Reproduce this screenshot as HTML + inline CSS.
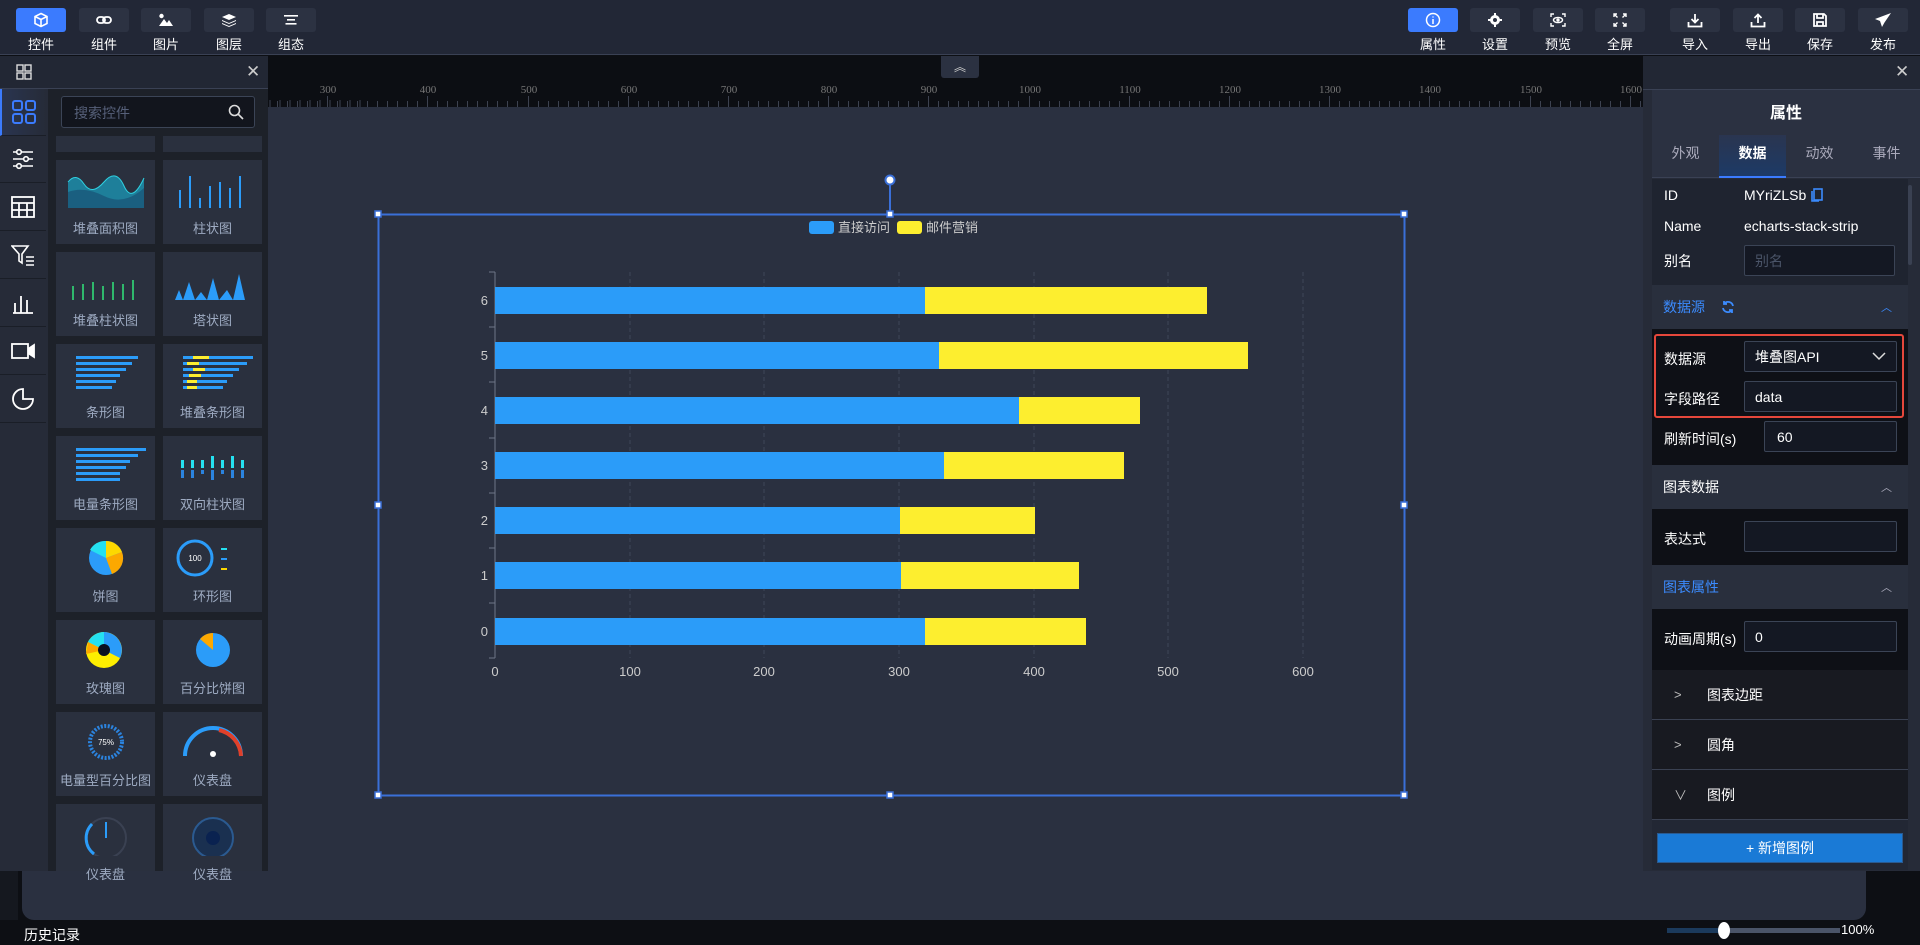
<!DOCTYPE html>
<html><head><meta charset="utf-8"><style>
*{margin:0;padding:0;box-sizing:border-box}
body{width:1920px;height:945px;overflow:hidden;background:#0d0f14;font-family:"Liberation Sans","Noto Sans CJK SC",sans-serif;color:#fff;position:relative}
.a{position:absolute}
.tb{position:absolute;top:8px;width:50px;height:24px;background:#2c3242;border-radius:3px;display:flex;align-items:center;justify-content:center}
.tb.on{background:#3b7bfe}
.tl{position:absolute;top:34px;width:50px;text-align:center;font-size:13px;color:#fff}
.ic{position:absolute;left:0;width:46px;height:47px;border-bottom:1px solid #1a1e27;display:flex;align-items:center;justify-content:center}
.card{position:absolute;width:99px;height:84px;background:#2a303e}
.card .t{position:absolute;left:0;right:0;top:58px;text-align:center;font-size:13px;color:#9eabc2}
.card svg{position:absolute;left:8px;top:8px}
.lab{position:absolute;font-size:14px;color:#fff}
.inp{position:absolute;background:#141823;border:1px solid #3b4456;border-radius:2px;font-size:14px;color:#fff;padding-left:10px;display:flex;align-items:center}
.sh{position:absolute;left:1652px;width:256px;height:44px;background:#292f3d;font-size:14px;display:flex;align-items:center;padding-left:11px}
.sh .ar{position:absolute;right:16px;top:14px;color:#aab;font-size:11px}
.row{position:absolute;left:1652px;width:256px;height:50px;background:#181a21;border-bottom:1px solid #3a4152;font-size:14px;display:flex;align-items:center;padding-left:55px}
.row .ch{position:absolute;left:22px;color:#bbb;font-size:13px}
</style></head><body>

<!-- top bar -->
<div class="a" style="left:0;top:0;width:1920px;height:55px;background:#222736;border-bottom:1px solid #3a4154"></div>
<div class="tb on" style="left:16px"><svg width="16" height="16" viewBox="0 0 16 16" fill="none" stroke="#fff" stroke-width="1.6"><path d="M8 1.5L14 4.5V11.5L8 14.5L2 11.5V4.5Z M2 4.5L8 7.5L14 4.5 M8 7.5V14.5"/></svg></div><div class="tl" style="left:16px">控件</div>
<div class="tb" style="left:79px"><svg width="16" height="10" viewBox="0 0 16 10" fill="none" stroke="#fff" stroke-width="1.8"><rect x="1" y="2" width="8" height="6" rx="3"/><rect x="7" y="2" width="8" height="6" rx="3"/></svg></div><div class="tl" style="left:79px">组件</div>
<div class="tb" style="left:141px"><svg width="16" height="14" viewBox="0 0 16 14" fill="#fff"><circle cx="3.5" cy="3" r="2.2"/><path d="M1 13L6 6L9 10L11 7L15 13Z"/></svg></div><div class="tl" style="left:141px">图片</div>
<div class="tb" style="left:204px"><svg width="16" height="14" viewBox="0 0 16 14" fill="#fff"><path d="M8 1L15 4L8 7L1 4Z"/><path d="M1 7L8 10L15 7V8L8 11L1 8Z"/><path d="M1 10L8 13L15 10V11L8 14L1 11Z"/></svg></div><div class="tl" style="left:204px">图层</div>
<div class="tb" style="left:266px"><svg width="14" height="10" viewBox="0 0 14 10" fill="#fff"><rect x="0" y="0" width="14" height="1.6"/><rect x="3" y="4" width="8" height="1.6"/><rect x="1.5" y="8" width="11" height="1.6"/></svg></div><div class="tl" style="left:266px">组态</div>

<div class="tb on" style="left:1408px"><svg width="16" height="16" viewBox="0 0 16 16" fill="none" stroke="#fff" stroke-width="1.5"><circle cx="8" cy="8" r="6.5"/><path d="M8 7V12 M8 4.5V5.5"/></svg></div><div class="tl" style="left:1408px">属性</div>
<div class="tb" style="left:1470px"><svg width="14" height="14" viewBox="0 0 14 14" fill="#fff"><circle cx="7" cy="7" r="5"/><circle cx="7" cy="7" r="2" fill="#2c3242"/><path d="M6 0h2v3H6zM6 11h2v3H6zM0 6h3v2H0zM11 6h3v2h-3z"/></svg></div><div class="tl" style="left:1470px">设置</div>
<div class="tb" style="left:1533px"><svg width="16" height="14" viewBox="0 0 16 14" fill="none" stroke="#fff" stroke-width="1.4"><path d="M1 4V1H4M12 1H15V4M15 10V13H12M4 13H1V10"/><ellipse cx="8" cy="7" rx="4.5" ry="2.6"/><circle cx="8" cy="7" r="1" fill="#fff"/></svg></div><div class="tl" style="left:1533px">预览</div>
<div class="tb" style="left:1595px"><svg width="14" height="14" viewBox="0 0 14 14" fill="none" stroke="#fff" stroke-width="1.4"><path d="M1 4V1H4M1 1L4.5 4.5M10 1H13V4M13 1L9.5 4.5M13 10V13H10M13 13L9.5 9.5M4 13H1V10M1 13L4.5 9.5"/></svg></div><div class="tl" style="left:1595px">全屏</div>
<div class="tb" style="left:1670px"><svg width="16" height="15" viewBox="0 0 16 15" fill="none" stroke="#fff" stroke-width="1.8"><path d="M8 1V9 M4.5 6L8 9.5L11.5 6 M1.5 9V13.5H14.5V9"/></svg></div><div class="tl" style="left:1670px">导入</div>
<div class="tb" style="left:1733px"><svg width="16" height="15" viewBox="0 0 16 15" fill="none" stroke="#fff" stroke-width="1.8"><path d="M8 10V2 M4.5 5L8 1.5L11.5 5 M1.5 9V13.5H14.5V9"/></svg></div><div class="tl" style="left:1733px">导出</div>
<div class="tb" style="left:1795px"><svg width="14" height="14" viewBox="0 0 14 14" fill="none" stroke="#fff" stroke-width="1.8"><path d="M1 1H11L13 3V13H1Z M4 1V5H10V1 M4 13V9H10V13"/></svg></div><div class="tl" style="left:1795px">保存</div>
<div class="tb" style="left:1858px"><svg width="18" height="16" viewBox="0 0 18 16" fill="#fff"><path d="M17 1L1 7L6 9L8 15L10.5 10.5L17 1Z"/></svg></div><div class="tl" style="left:1858px">发布</div>

<!-- ruler -->
<div class="a" style="left:268px;top:56px;width:1375px;height:51px;background:#0c0e13"></div>
<svg class="a" style="left:0;top:0" width="1920" height="945">
<g stroke="#3d4250" stroke-width="1">
<path d="M270 100V107M280 100V107M290 100V107M300 100V107M310 100V107M320 100V107M330 100V107M340 100V107M350 100V107M360 100V107"/>
</g>
</svg>
<div id="ruler"></div>

<!-- canvas -->
<div class="a" style="left:268px;top:107px;width:1382px;height:764px;background:#2a3040"></div>
<div class="a" style="left:22px;top:860px;width:1844px;height:60px;background:#2a3040;border-radius:0 0 12px 12px"></div>
<div class="a" style="left:941px;top:56px;width:38px;height:22px;background:#2b3141;border-radius:0 0 3px 3px;text-align:center;color:#ccc;font-size:12px;line-height:22px">︽</div>

<!-- chart -->
<svg class="a" style="left:0;top:0" width="1920" height="945" font-family="Liberation Sans, Noto Sans CJK SC, sans-serif">
<rect x="378.5" y="214.5" width="1026" height="581" fill="none" stroke="#3a6fd8" stroke-width="2"/>
<line x1="890" y1="183" x2="890" y2="214" stroke="#3a6fd8" stroke-width="2"/>
<circle cx="890" cy="180" r="4.5" fill="#fff" stroke="#3a6fd8" stroke-width="2"/>
<g fill="#fff" stroke="#3a6fd8" stroke-width="1.5">
<rect x="375" y="211" width="6" height="6"/><rect x="887" y="211" width="6" height="6"/><rect x="1401" y="211" width="6" height="6"/>
<rect x="375" y="502" width="6" height="6"/><rect x="1401" y="502" width="6" height="6"/>
<rect x="375" y="792" width="6" height="6"/><rect x="887" y="792" width="6" height="6"/><rect x="1401" y="792" width="6" height="6"/>
</g>
<rect x="809" y="221" width="25" height="13" rx="3" fill="#2b9cf9"/><text x="838" y="232" font-size="13" fill="#ccc">直接访问</text>
<rect x="897" y="221" width="25" height="13" rx="3" fill="#fdee2f"/><text x="926" y="232" font-size="13" fill="#ccc">邮件营销</text>
<g stroke="#3f4658" stroke-dasharray="4 3">
<path d="M630 272V658M764 272V658M899 272V658M1034 272V658M1168 272V658M1303 272V658"/>
</g>
<g stroke="#6e7687"><path d="M495 272V658M489 272H495M489 327H495M489 382H495M489 438H495M489 493H495M489 548H495M489 603H495M489 658H495"/></g>
<g font-size="13" fill="#ccc" text-anchor="end">
<text x="488" y="305">6</text><text x="488" y="360">5</text><text x="488" y="415">4</text><text x="488" y="470">3</text><text x="488" y="525">2</text><text x="488" y="580">1</text><text x="488" y="636">0</text>
</g>
<g font-size="13" fill="#ccc" text-anchor="middle">
<text x="495" y="676">0</text><text x="630" y="676">100</text><text x="764" y="676">200</text><text x="899" y="676">300</text><text x="1034" y="676">400</text><text x="1168" y="676">500</text><text x="1303" y="676">600</text>
</g>
<g fill="#2b9cf9">
<rect x="495" y="287" width="430" height="27"/><rect x="495" y="342" width="444" height="27"/><rect x="495" y="397" width="524" height="27"/><rect x="495" y="452" width="449" height="27"/><rect x="495" y="507" width="405" height="27"/><rect x="495" y="562" width="406" height="27"/><rect x="495" y="618" width="430" height="27"/>
</g>
<g fill="#fdee2f">
<rect x="925" y="287" width="282" height="27"/><rect x="939" y="342" width="309" height="27"/><rect x="1019" y="397" width="121" height="27"/><rect x="944" y="452" width="180" height="27"/><rect x="900" y="507" width="135" height="27"/><rect x="901" y="562" width="178" height="27"/><rect x="925" y="618" width="161" height="27"/>
</g>
</svg>

<!-- left panel -->
<div class="a" style="left:0;top:56px;width:268px;height:815px;background:#222734"></div>
<div class="a" style="left:0;top:56px;width:268px;height:33px;border-bottom:1px solid #3a4154"></div>
<svg class="a" style="left:16px;top:64px" width="16" height="16" fill="none" stroke="#ddd" stroke-width="1.4"><rect x="1" y="1" width="6" height="6"/><rect x="9" y="1" width="6" height="6"/><rect x="1" y="9" width="6" height="6"/><rect x="9" y="9" width="6" height="6"/></svg>
<div class="a" style="left:246px;top:62px;color:#ccc;font-size:17px">✕</div>
<div class="a" style="left:0;top:89px;width:48px;height:782px;background:#262b38"></div>
<div class="ic" style="top:89px;background:linear-gradient(90deg,#2a3550,#262b38);border-left:2px solid #3b7bfe"><svg width="24" height="24" fill="none" stroke="#3b7bfe" stroke-width="2"><rect x="1" y="1" width="9" height="9" rx="2"/><rect x="14" y="1" width="9" height="9" rx="2"/><rect x="1" y="14" width="9" height="9" rx="2"/><rect x="14" y="14" width="9" height="9" rx="2"/></svg></div>
<div class="ic" style="top:136px"><svg width="22" height="22" fill="none" stroke="#fff" stroke-width="1.6"><path d="M1 4H21M1 11H21M1 18H21"/><circle cx="7" cy="4" r="2.3" fill="#262b38"/><circle cx="14" cy="11" r="2.3" fill="#262b38"/><circle cx="7" cy="18" r="2.3" fill="#262b38"/></svg></div>
<div class="ic" style="top:184px"><svg width="24" height="22" fill="none" stroke="#fff" stroke-width="1.8"><rect x="1" y="1" width="22" height="20"/><path d="M1 7H23M1 14H23M8 7V21M16 7V21"/></svg></div>
<div class="ic" style="top:232px"><svg width="24" height="22" fill="none" stroke="#fff" stroke-width="1.6"><path d="M1 2H17L11 10V19L8 17V10Z M15 13H23M15 17H23M15 21H23"/></svg></div>
<div class="ic" style="top:280px"><svg width="22" height="22" fill="none" stroke="#fff" stroke-width="1.8"><path d="M3 21V11M9 21V4M15 21V8M1 21H21"/></svg></div>
<div class="ic" style="top:328px"><svg width="24" height="18" fill="none" stroke="#fff" stroke-width="1.8"><rect x="1" y="2" width="16" height="14"/><path d="M17 7L23 3V15L17 11" fill="#fff"/></svg></div>
<div class="ic" style="top:376px"><svg width="24" height="24" fill="none" stroke="#fff" stroke-width="1.8"><path d="M12 2A10 10 0 1 0 22 12H12Z M12 2V12H22"/></svg></div>

<div class="a" style="left:48px;top:89px;width:220px;height:782px;background:#1d2129"></div>
<div class="a" style="left:61px;top:96px;width:194px;height:32px;background:#12151d;border:1px solid #3b4456;border-radius:3px;color:#566079;font-size:14px;padding:6px 0 0 12px">搜索控件</div>
<svg class="a" style="left:228px;top:104px" width="16" height="16" fill="none" stroke="#ddd" stroke-width="1.6"><circle cx="6.5" cy="6.5" r="5"/><path d="M10 10L15 15"/></svg>
<div class="card" style="left:56px;top:136px;height:16px"></div><div class="card" style="left:163px;top:136px;height:16px"></div>

<div class="card" style="left:56px;top:160px"><svg width="83" height="44"><path d="M4 40V14Q12 4 20 16T40 14T60 18T80 10V40Z" fill="#1e7f9a"/><path d="M4 40V24Q20 18 40 28T80 20V40Z" fill="#1a5f80"/><path d="M4 14Q12 4 20 16T40 14T60 18T80 10" stroke="#2fd0e0" fill="none"/></svg><div class="t">堆叠面积图</div></div>
<div class="card" style="left:163px;top:160px"><svg width="83" height="44" fill="#2b9cf9"><rect x="8" y="22" width="2" height="18"/><rect x="18" y="8" width="2" height="32"/><rect x="28" y="30" width="2" height="10"/><rect x="38" y="18" width="2" height="22"/><rect x="48" y="14" width="2" height="26"/><rect x="58" y="20" width="2" height="20"/><rect x="68" y="8" width="2" height="32"/></svg><div class="t">柱状图</div></div>
<div class="card" style="left:56px;top:252px"><svg width="83" height="44"><g fill="#2fb86c"><rect x="8" y="26" width="2" height="14"/><rect x="18" y="24" width="2" height="16"/><rect x="28" y="22" width="2" height="18"/><rect x="38" y="26" width="2" height="14"/><rect x="48" y="22" width="2" height="18"/><rect x="58" y="24" width="2" height="16"/><rect x="68" y="20" width="2" height="20"/></g></svg><div class="t">堆叠柱状图</div></div>
<div class="card" style="left:163px;top:252px"><svg width="83" height="44" fill="#2b9cf9"><path d="M4 40L8 30L12 40L18 22L24 40L30 32L36 40L42 18L48 40L56 30L62 40L68 14L74 40Z"/></svg><div class="t">塔状图</div></div>
<div class="card" style="left:56px;top:344px"><svg width="83" height="44" fill="#2b9cf9"><rect x="12" y="4" width="62" height="3"/><rect x="12" y="10" width="56" height="3"/><rect x="12" y="16" width="50" height="3"/><rect x="12" y="22" width="44" height="3"/><rect x="12" y="28" width="40" height="3"/><rect x="12" y="34" width="36" height="3"/></svg><div class="t">条形图</div></div>
<div class="card" style="left:163px;top:344px"><svg width="83" height="44"><g fill="#2b9cf9"><rect x="12" y="4" width="70" height="3"/><rect x="12" y="10" width="64" height="3"/><rect x="12" y="16" width="56" height="3"/><rect x="12" y="22" width="50" height="3"/><rect x="12" y="28" width="44" height="3"/><rect x="12" y="34" width="40" height="3"/></g><g fill="#fdee2f"><rect x="22" y="4" width="16" height="3"/><rect x="16" y="10" width="12" height="3"/><rect x="22" y="16" width="12" height="3"/><rect x="18" y="22" width="12" height="3"/><rect x="16" y="28" width="10" height="3"/><rect x="16" y="34" width="10" height="3"/></g></svg><div class="t">堆叠条形图</div></div>
<div class="card" style="left:56px;top:436px"><svg width="83" height="44" fill="#2b9cf9"><rect x="12" y="4" width="70" height="3"/><rect x="12" y="10" width="62" height="3"/><rect x="12" y="16" width="54" height="3"/><rect x="12" y="22" width="50" height="3"/><rect x="12" y="28" width="44" height="3"/><rect x="12" y="34" width="44" height="3"/></svg><div class="t">电量条形图</div></div>
<div class="card" style="left:163px;top:436px"><svg width="83" height="44"><g fill="#25e0f0"><rect x="10" y="16" width="3" height="8"/><rect x="20" y="16" width="3" height="8"/><rect x="30" y="16" width="3" height="8"/><rect x="40" y="12" width="3" height="12"/><rect x="50" y="16" width="3" height="8"/><rect x="60" y="12" width="3" height="12"/><rect x="70" y="16" width="3" height="8"/></g><g fill="#2b84e0"><rect x="10" y="26" width="3" height="8"/><rect x="20" y="26" width="3" height="8"/><rect x="30" y="26" width="3" height="4"/><rect x="40" y="26" width="3" height="10"/><rect x="50" y="26" width="3" height="4"/><rect x="60" y="26" width="3" height="8"/><rect x="70" y="26" width="3" height="8"/></g></svg><div class="t">双向柱状图</div></div>
<div class="card" style="left:56px;top:528px"><svg width="83" height="44"><circle cx="42" cy="22" r="17" fill="#2b9cf9"/><path d="M42 22L42 5A17 17 0 0 1 58 16Z" fill="#fdd800"/><path d="M42 22L58 16A17 17 0 0 1 48 38Z" fill="#fca800"/><path d="M42 22L26 14A17 17 0 0 1 42 5Z" fill="#25e0f0"/></svg><div class="t">饼图</div></div>
<div class="card" style="left:163px;top:528px"><svg width="83" height="44"><circle cx="24" cy="22" r="17" fill="none" stroke="#2b9cf9" stroke-width="3"/><text x="24" y="25" font-size="8" fill="#fff" text-anchor="middle">100</text><rect x="50" y="12" width="6" height="2" fill="#25e0f0"/><rect x="50" y="22" width="6" height="2" fill="#2b9cf9"/><rect x="50" y="32" width="6" height="2" fill="#fdd800"/></svg><div class="t">环形图</div></div>
<div class="card" style="left:56px;top:620px"><svg width="83" height="44"><circle cx="40" cy="22" r="18" fill="#fdee00"/><path d="M40 22L40 4A18 18 0 0 1 56 30Z" fill="#2b9cf9"/><path d="M40 22L24 14A18 18 0 0 1 40 4Z" fill="#25e0f0"/><path d="M40 22L22 26L24 14Z" fill="#fca800"/><circle cx="40" cy="22" r="6" fill="#0a1020"/></svg><div class="t">玫瑰图</div></div>
<div class="card" style="left:163px;top:620px"><svg width="83" height="44"><circle cx="42" cy="22" r="17" fill="#2b9cf9"/><path d="M42 22L42 5A17 17 0 0 0 29 11Z" fill="#fca800"/></svg><div class="t">百分比饼图</div></div>
<div class="card" style="left:56px;top:712px"><svg width="83" height="44"><circle cx="42" cy="22" r="16" fill="none" stroke="#2b84e0" stroke-width="4" stroke-dasharray="2 1.5"/><text x="42" y="25" font-size="8" fill="#fff" text-anchor="middle">75%</text></svg><div class="t">电量型百分比图</div></div>
<div class="card" style="left:163px;top:712px"><svg width="83" height="44"><path d="M14 36A28 28 0 0 1 70 36" fill="none" stroke="#2b9cf9" stroke-width="4"/><path d="M48 10A28 28 0 0 1 70 36" fill="none" stroke="#e0402a" stroke-width="4"/><circle cx="42" cy="34" r="3" fill="#fff"/></svg><div class="t">仪表盘</div></div>
<div class="card" style="left:56px;top:804px;height:67px"><svg width="83" height="44"><circle cx="42" cy="26" r="20" fill="none" stroke="#3a4152" stroke-width="2"/><path d="M30 42A20 20 0 0 1 28 12" fill="none" stroke="#2b9cf9" stroke-width="3"/><path d="M42 26V10" stroke="#2b9cf9" stroke-width="2"/></svg><div class="t" style="top:60px">仪表盘</div></div>
<div class="card" style="left:163px;top:804px;height:67px"><svg width="83" height="44"><circle cx="42" cy="26" r="20" fill="#1a3050" stroke="#2b5a90" stroke-width="2"/><circle cx="42" cy="26" r="7" fill="#0a2250"/></svg><div class="t" style="top:60px">仪表盘</div></div>

<!-- right panel -->
<div class="a" style="left:1643px;top:56px;width:277px;height:815px;background:#262b38"></div>
<div class="a" style="left:1643px;top:56px;width:277px;height:34px;background:#222734;border-bottom:1px solid #3a4154"></div>
<div class="a" style="left:1895px;top:62px;color:#ccc;font-size:17px">✕</div>
<div class="a" style="left:1652px;top:90px;width:268px;height:88px;background:#2b3141"></div>
<div class="a" style="left:1652px;top:99px;width:268px;text-align:center;font-size:16px;font-weight:bold">属性</div>
<div class="a" style="left:1652px;top:133px;width:268px;height:45px;border-bottom:1px solid #3a4154;font-size:14px"></div>
<div class="a" style="left:1719px;top:135px;width:67px;height:43px;background:linear-gradient(#2a3550,#1d3a66);border-bottom:2px solid #3b7bfe"></div>
<div class="a" style="left:1652px;top:143px;width:67px;text-align:center;font-size:14px;color:#aab">外观</div>
<div class="a" style="left:1719px;top:143px;width:67px;text-align:center;font-size:14px;font-weight:bold">数据</div>
<div class="a" style="left:1786px;top:143px;width:67px;text-align:center;font-size:14px;color:#aab">动效</div>
<div class="a" style="left:1853px;top:143px;width:67px;text-align:center;font-size:14px;color:#aab">事件</div>
<div class="a" style="left:1652px;top:179px;width:256px;height:106px;background:#1f2430"></div>
<div class="a" style="left:1908px;top:185px;width:4px;height:80px;background:#3a4152;border-radius:2px"></div>
<div class="lab" style="left:1664px;top:187px">ID</div><div class="lab" style="left:1744px;top:187px">MYriZLSb</div>
<svg class="a" style="left:1811px;top:188px" width="12" height="14" fill="none" stroke="#3b8bfe" stroke-width="1.6"><rect x="3" y="1" width="8" height="11"/><path d="M1 3V13H8"/></svg>
<div class="lab" style="left:1664px;top:218px">Name</div><div class="lab" style="left:1744px;top:218px">echarts-stack-strip</div>
<div class="lab" style="left:1664px;top:251px">别名</div>
<div class="inp" style="left:1744px;top:245px;width:151px;height:31px;color:#4a5468">别名</div>

<div class="sh" style="top:285px;color:#3b8bfe">数据源<svg style="margin-left:16px" width="14" height="14" fill="none" stroke="#3b8bfe" stroke-width="1.8"><path d="M12 6A5 5 0 0 0 3 4M2 8A5 5 0 0 0 11 10M3 1V4H6M11 13V10H8"/></svg><span class="ar" style="color:#3b8bfe">︿</span></div>
<div class="a" style="left:1652px;top:329px;width:256px;height:136px;background:#0e1016"></div>
<div class="a" style="left:1654px;top:334px;width:250px;height:84px;border:2px solid #e5473b;border-radius:3px"></div>
<div class="lab" style="left:1664px;top:349px">数据源</div>
<div class="inp" style="left:1744px;top:341px;width:153px;height:31px">堆叠图API<svg style="position:absolute;right:10px;top:10px" width="14" height="9" fill="none" stroke="#ddd" stroke-width="1.5"><path d="M1 1L7 7L13 1"/></svg></div>
<div class="lab" style="left:1664px;top:389px">字段路径</div>
<div class="inp" style="left:1744px;top:381px;width:153px;height:31px">data</div>
<div class="lab" style="left:1664px;top:429px">刷新时间(s)</div>
<div class="inp" style="left:1764px;top:421px;width:133px;height:31px;padding-left:12px">60</div>

<div class="sh" style="top:465px">图表数据<span class="ar">︿</span></div>
<div class="a" style="left:1652px;top:509px;width:256px;height:56px;background:#0e1016"></div>
<div class="lab" style="left:1664px;top:529px">表达式</div>
<div class="inp" style="left:1744px;top:521px;width:153px;height:31px"></div>

<div class="sh" style="top:565px;color:#3b8bfe">图表属性<span class="ar">︿</span></div>
<div class="a" style="left:1652px;top:609px;width:256px;height:61px;background:#0e1016"></div>
<div class="lab" style="left:1664px;top:629px">动画周期(s)</div>
<div class="inp" style="left:1744px;top:621px;width:153px;height:31px">0</div>

<div class="row" style="top:670px"><span class="ch">&gt;</span>图表边距</div>
<div class="row" style="top:720px"><span class="ch">&gt;</span>圆角</div>
<div class="row" style="top:770px"><span class="ch">∨</span>图例</div>
<div class="a" style="left:1652px;top:820px;width:256px;height:50px;background:#222734"></div>
<div class="a" style="left:1657px;top:833px;width:246px;height:30px;background:#1a7ad6;border:1px solid #2a5a90;text-align:center;font-size:14px;line-height:28px">+ 新增图例</div>

<!-- bottom -->
<div class="a" style="left:0;top:871px;width:18px;height:49px;background:#15181f"></div>
<div class="a" style="left:24px;top:925px;font-size:14px">历史记录</div>
<div class="a" style="left:1667px;top:928px;width:173px;height:5px;background:#4a5468"></div>
<div class="a" style="left:1667px;top:928px;width:57px;height:5px;background:#1b3a5c"></div>
<div class="a" style="left:1718px;top:922px;width:12px;height:17px;background:#fff;border-radius:50%"></div>
<div class="a" style="left:1841px;top:922px;font-size:13px">100%</div>

<script>
var r=document.getElementById('ruler'),h='';
for(var v=250;v<=1610;v+=10){var x=Math.round(26.5+v*1.002);if(x<270||x>1640)continue;var big=v%100==0;h+='<div class="a" style="left:'+x+'px;top:'+(big?96:101)+'px;width:1px;height:'+(big?11:6)+'px;background:#3d4250"></div>';if(big)h+='<div class="a" style="left:'+(x-14)+'px;top:84px;width:30px;text-align:center;font:11px Liberation Serif,serif;color:#777">'+v+'</div>';}
r.innerHTML=h;
</script>
</body></html>
